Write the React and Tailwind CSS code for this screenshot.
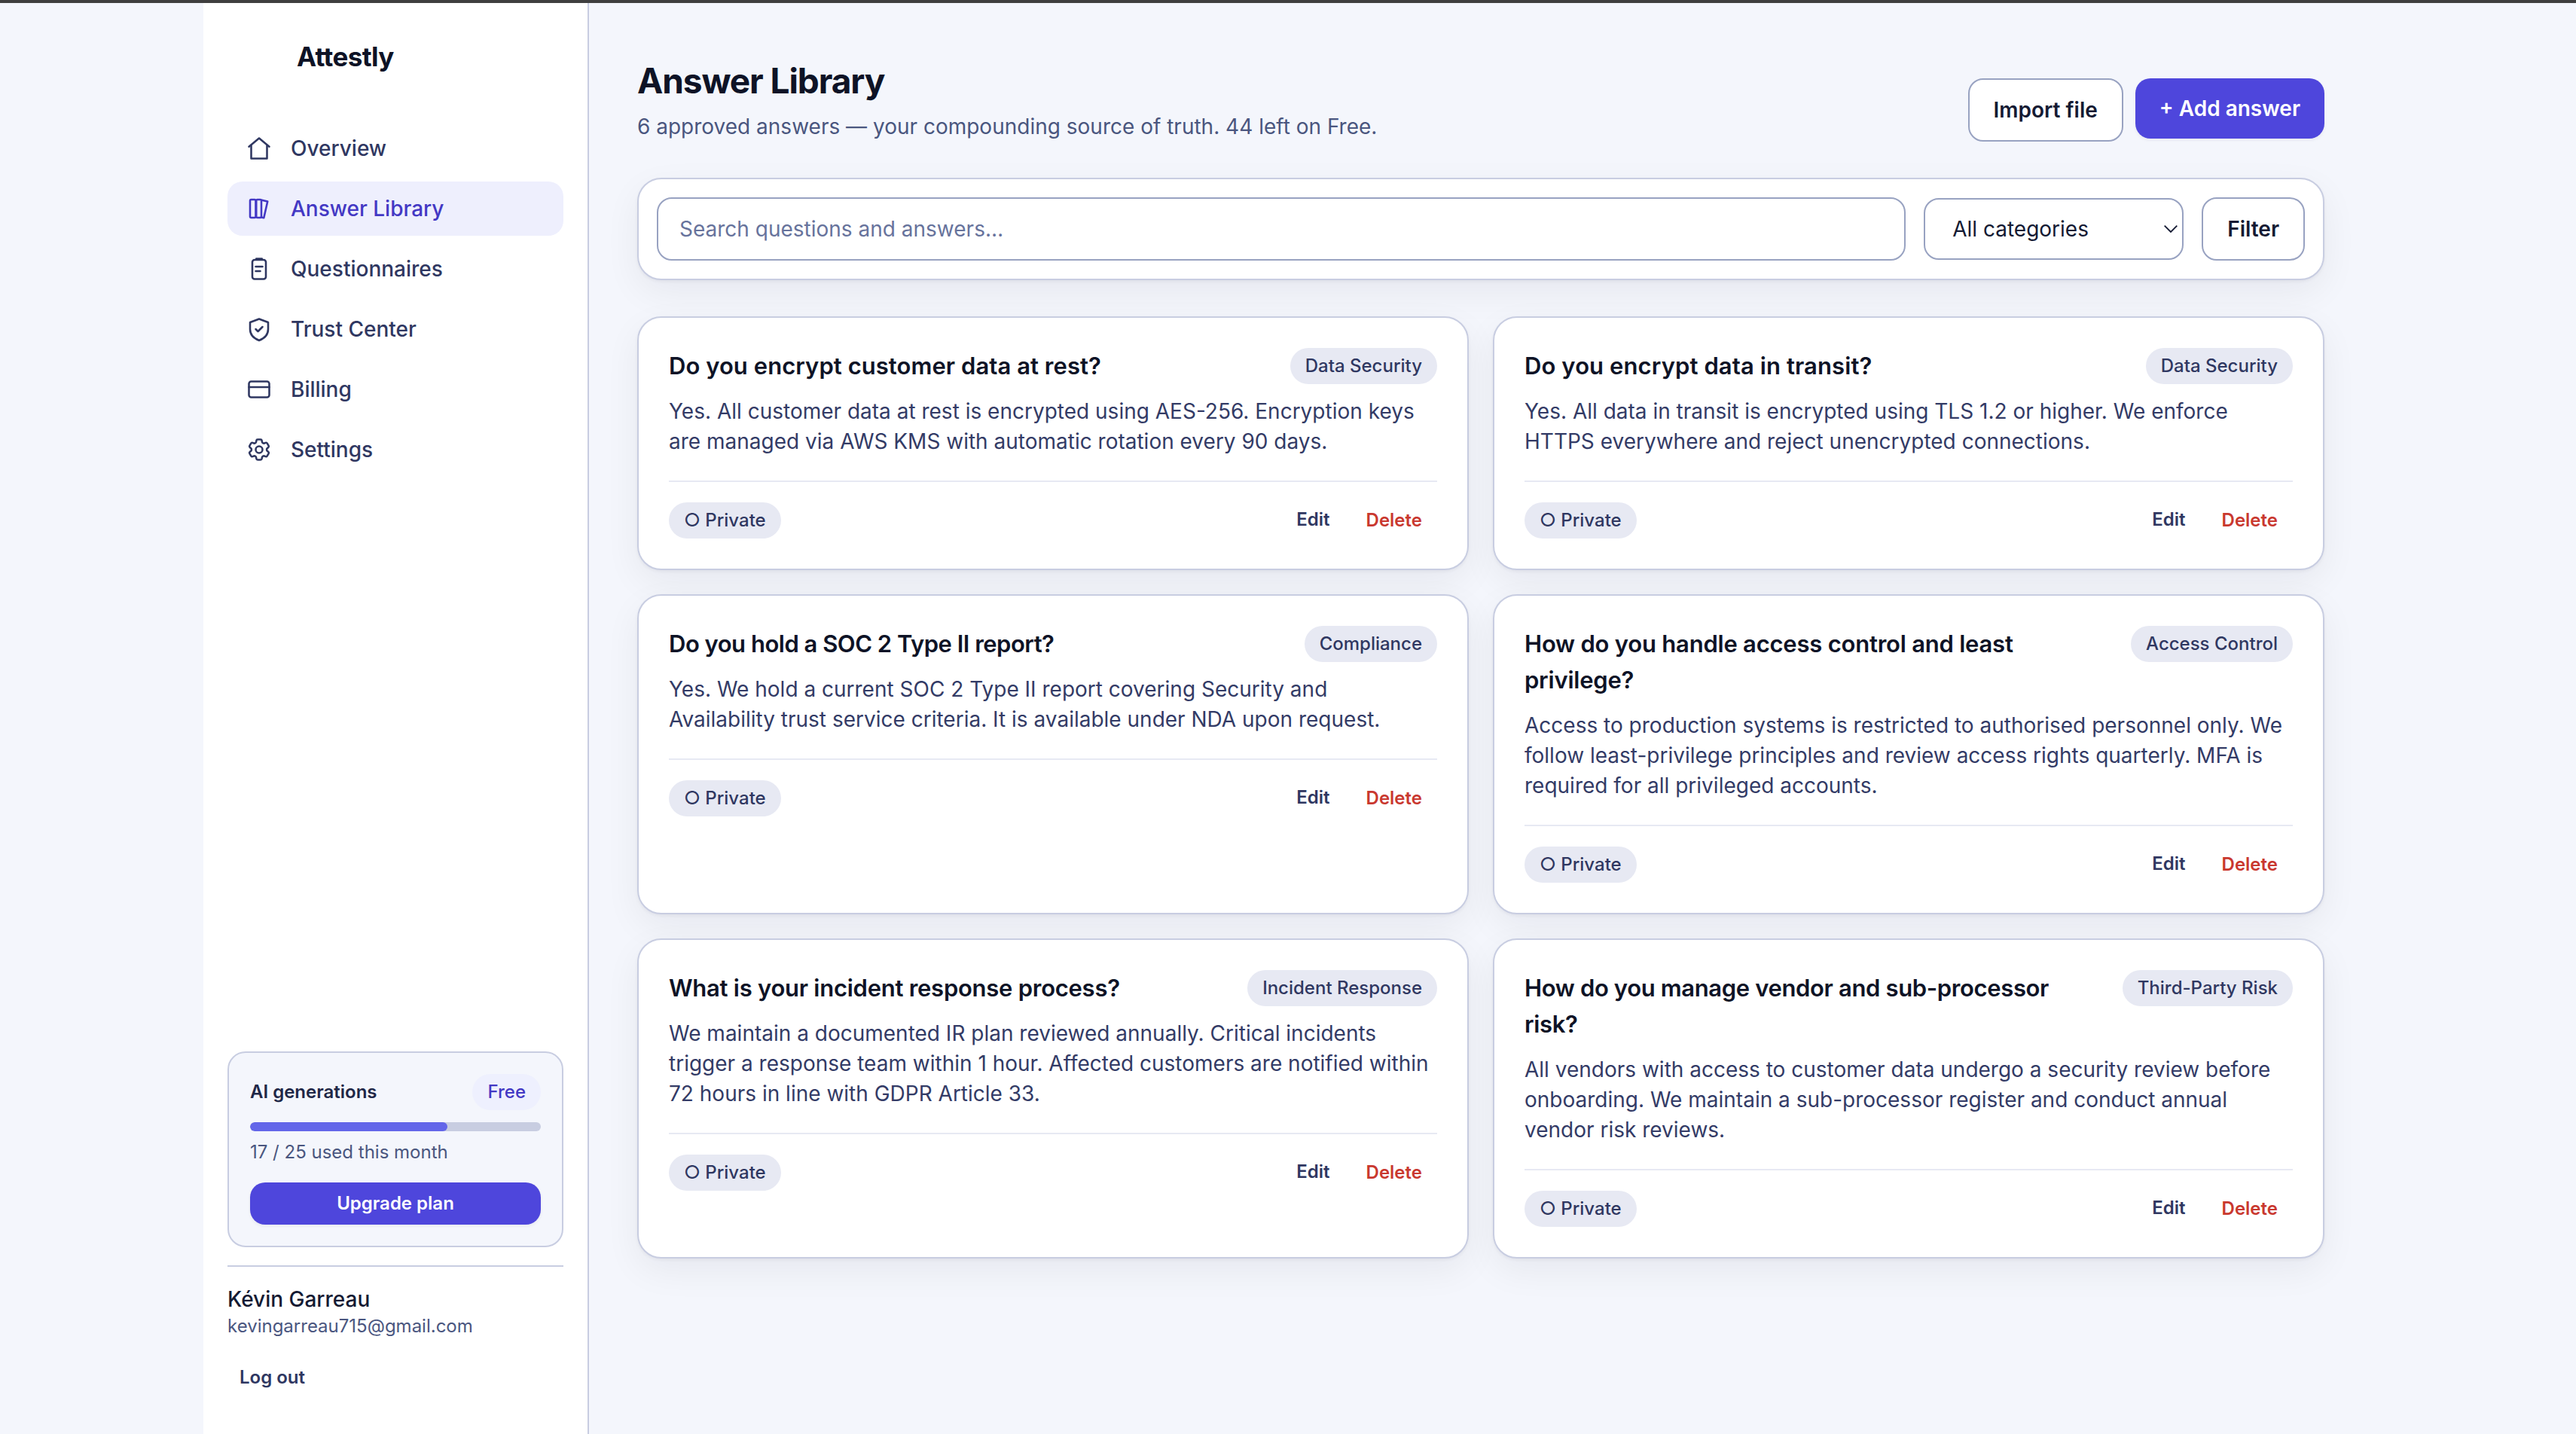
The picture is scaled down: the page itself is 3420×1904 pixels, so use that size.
import React from 'react';

const NAV_ITEMS = [
    { label: 'Overview', icon: 'home' },
    { label: 'Answer Library', icon: 'books', active: true },
    { label: 'Questionnaires', icon: 'clipboard' },
    { label: 'Trust Center', icon: 'shield' },
    { label: 'Billing', icon: 'card' },
    { label: 'Settings', icon: 'gear' },
];

const ANSWERS = [
    {
        question: 'Do you encrypt customer data at rest?',
        answer: 'Yes. All customer data at rest is encrypted using AES-256. Encryption keys are managed via AWS KMS with automatic rotation every 90 days.',
        category: 'Data Security',
        tracking: 'tracking-[0.05px]',
    },
    {
        question: 'Do you encrypt data in transit?',
        answer: 'Yes. All data in transit is encrypted using TLS 1.2 or higher. We enforce HTTPS everywhere and reject unencrypted connections.',
        category: 'Data Security',
        tracking: 'tracking-[0.1px]',
    },
    {
        question: 'Do you hold a SOC 2 Type II report?',
        answer: 'Yes. We hold a current SOC 2 Type II report covering Security and Availability trust service criteria. It is available under NDA upon request.',
        category: 'Compliance',
        tracking: 'tracking-[-0.5px]',
    },
    {
        question: 'How do you handle access control and least privilege?',
        answer: 'Access to production systems is restricted to authorised personnel only. We follow least-privilege principles and review access rights quarterly. MFA is required for all privileged accounts.',
        category: 'Access Control',
        tracking: 'tracking-[-0.22px]',
    },
    {
        question: 'What is your incident response process?',
        answer: 'We maintain a documented IR plan reviewed annually. Critical incidents trigger a response team within 1 hour. Affected customers are notified within 72 hours in line with GDPR Article 33.',
        category: 'Incident Response',
        tracking: 'tracking-[-0.26px]',
    },
    {
        question: 'How do you manage vendor and sub-processor risk?',
        answer: 'All vendors with access to customer data undergo a security review before onboarding. We maintain a sub-processor register and conduct annual vendor risk reviews.',
        category: 'Third-Party Risk',
        tracking: 'tracking-[-0.36px]',
    },
];

const USAGE = { used: 17, limit: 25 };

const ICONS = {
    home: (
        <>
            <path d="M3 10.5 12 3l9 7.5" />
            <path d="M5 9.5V21h14V9.5" />
        </>
    ),
    books: (
        <>
            <rect x="4" y="4" width="5" height="16" rx="1" />
            <rect x="9.5" y="4" width="4.5" height="16" rx="1" />
            <path d="m14.5 4.5 5 1.1-3.3 14.6-2.4-.5" />
        </>
    ),
    clipboard: (
        <>
            <rect x="6" y="4" width="12" height="17" rx="2" />
            <path d="M9.5 3h5M9 10h6M9 14h4" />
        </>
    ),
    shield: (
        <>
            <path d="m12 3 8 3v6c0 5-3.5 8.3-8 10-4.5-1.7-8-5-8-10V6z" />
            <path d="m9 12 2 2 4-4" />
        </>
    ),
    card: (
        <>
            <rect x="3" y="5" width="18" height="14" rx="2" />
            <path d="M3 10h18" />
        </>
    ),
    gear: (
        <>
            <path d="M9.594 3.94c.09-.542.56-.94 1.11-.94h2.593c.55 0 1.02.398 1.11.94l.213 1.281c.063.374.313.686.645.87.074.04.147.083.22.127.325.196.72.257 1.075.124l1.217-.456a1.125 1.125 0 0 1 1.37.49l1.296 2.247a1.125 1.125 0 0 1-.26 1.431l-1.003.827c-.293.241-.438.613-.43.992a7.723 7.723 0 0 1 0 .255c-.008.378.137.75.43.991l1.004.827c.424.35.534.955.26 1.43l-1.298 2.247a1.125 1.125 0 0 1-1.369.491l-1.217-.456c-.355-.133-.75-.072-1.076.124a6.47 6.47 0 0 1-.22.128c-.331.183-.581.495-.644.869l-.213 1.281c-.09.543-.56.94-1.11.94h-2.594c-.55 0-1.019-.398-1.11-.94l-.213-1.281c-.062-.374-.312-.686-.644-.87a6.52 6.52 0 0 1-.22-.127c-.325-.196-.72-.257-1.076-.124l-1.217.456a1.125 1.125 0 0 1-1.369-.49l-1.297-2.247a1.125 1.125 0 0 1 .26-1.431l1.004-.827c.292-.24.437-.613.43-.991a6.932 6.932 0 0 1 0-.255c.007-.38-.138-.751-.43-.992l-1.004-.827a1.125 1.125 0 0 1-.26-1.43l1.297-2.247a1.125 1.125 0 0 1 1.37-.491l1.216.456c.356.133.751.072 1.076-.124.072-.044.146-.086.22-.128.332-.183.582-.495.644-.869l.214-1.28Z" />
            <circle cx="12" cy="12" r="3" />
        </>
    ),
};

function NavIcon({ name }) {
    return (
        <svg
            viewBox="0 0 24 24"
            className="size-9 shrink-0"
            fill="none"
            stroke="currentColor"
            strokeWidth="1.7"
            strokeLinecap="round"
            strokeLinejoin="round"
        >
            {ICONS[name]}
        </svg>
    );
}

function NavItem({ item }) {
    return (
        <a
            className={`flex h-[72px] items-center gap-6 rounded-[20px] px-6 text-[28px] font-medium ${
                item.active ? 'bg-[#eeeffd] text-[#4338c4]' : 'text-[#2f3761]'
            }`}
        >
            <NavIcon name={item.icon} />
            {item.label}
        </a>
    );
}

function UsageBox() {
    return (
        <div className="rounded-3xl border-2 border-[#c8cde1] bg-[#f4f6fc] p-7">
            <div className="flex items-center justify-between">
                <span className="text-2xl font-semibold text-[#1f2747]">AI generations</span>
                <span className="flex h-12 items-center rounded-full bg-[#eef0fe] px-5 text-2xl font-medium text-[#4338c4]">Free</span>
            </div>
            <div className="mt-4 h-3 overflow-hidden rounded-full bg-[#c8cde1]">
                <div
                    className="h-full rounded-full bg-[#6366e9]"
                    style={{ width: `${(USAGE.used / USAGE.limit) * 100}%` }}
                />
            </div>
            <p className="mt-2.5 text-2xl leading-9 text-[#4a567f]">
                {USAGE.used} / {USAGE.limit} used this month
            </p>
            <button className="mt-[22px] h-14 w-full rounded-[20px] bg-[#4e46dc] text-2xl font-semibold text-white shadow-[0_2px_4px_rgba(14,18,36,0.06)]">
                Upgrade plan
            </button>
        </div>
    );
}

function Sidebar() {
    return (
        <aside className="flex w-[512px] shrink-0 flex-col border-r-2 border-[#c8cde1] bg-white px-8 pt-8 pb-[47px]">
            <div className="h-[78px] pl-[92px] text-[35px] leading-[78px] font-bold tracking-[-0.6px] text-[#0e1326]">
                Attestly
            </div>
            <nav className="mt-[47px] flex flex-col gap-2">
                {NAV_ITEMS.map((item) => (
                    <NavItem key={item.label} item={item} />
                ))}
            </nav>

            <div className="mt-auto">
                <UsageBox />
                <div className="mt-6 border-t-2 border-[#c8cde1] pt-6">
                    <div className="text-[28px] leading-[39px] font-medium text-[#141a33]">Kévin Garreau</div>
                    <div className="text-2xl leading-8 text-[#4a567f]">kevingarreau715@gmail.com</div>
                    <button className="mt-6 h-14 px-4 text-2xl font-semibold text-[#2f3761]">Log out</button>
                </div>
            </div>
        </aside>
    );
}

function PageHeader() {
    return (
        <header className="flex items-end justify-between">
            <div>
                <h1 className="text-[46px] leading-[78px] font-bold tracking-[-1.1px] text-[#0e1326]">Answer Library</h1>
                <p className="mt-0.5 text-[28px] leading-10 text-[#4a567f]">
                    6 approved answers — your compounding source of truth. 44 left on Free.
                </p>
            </div>
            <div className="flex items-start gap-4">
                <button className="h-[84px] rounded-[20px] border-2 border-[#98a2c1] bg-white px-8 text-[28px] font-semibold text-[#141a33]">
                    Import file
                </button>
                <button className="h-20 rounded-[20px] bg-[#4e46dc] px-8 text-[28px] font-semibold text-white shadow-[0_2px_4px_rgba(14,18,36,0.06)]">
                    + Add answer
                </button>
            </div>
        </header>
    );
}

function SearchBar() {
    return (
        <div className="mt-12 flex items-center gap-6 rounded-[32px] border-2 border-[#c8cde1] bg-white p-6 shadow-[0_2px_4px_rgba(14,18,36,0.05),0_16px_48px_rgba(14,18,36,0.06)]">
            <input
                type="text"
                placeholder="Search questions and answers…"
                className="h-[84px] min-w-0 flex-1 rounded-[20px] border-2 border-[#98a2c1] bg-white px-7 text-[28px] placeholder:text-[#67739c]"
            />
            <div className="flex h-[82px] w-[345px] items-center justify-between rounded-[20px] border-2 border-[#98a2c1] pr-1.5 pl-9 text-[28px] text-[#141a33]">
                All categories
                <svg viewBox="0 0 18 10" className="h-2.5 w-[18px]" fill="none" stroke="#141a33" strokeWidth="1.8">
                    <path d="m.7.7 8.3 8.3L17.3.7" />
                </svg>
            </div>
            <button className="h-[84px] rounded-[20px] border-2 border-[#98a2c1] bg-white px-8 text-[28px] font-semibold text-[#141a33]">
                Filter
            </button>
        </div>
    );
}

function Badge({ children }) {
    return (
        <span className="flex h-12 shrink-0 items-center rounded-full bg-[#e7e9f3] px-5 text-2xl font-medium whitespace-nowrap text-[#2f3761]">
            {children}
        </span>
    );
}

function AnswerCard({ question, answer, category, tracking }) {
    return (
        <article className="rounded-[32px] border-2 border-[#c8cde1] bg-white p-10 shadow-[0_2px_4px_rgba(14,18,36,0.05),0_16px_48px_rgba(14,18,36,0.06)]">
            <div className="flex items-start justify-between gap-10">
                <h2 className={`text-[31px] leading-[48px] font-semibold text-[#0e1326] ${tracking}`}>{question}</h2>
                <Badge>{category}</Badge>
            </div>
            <p className="mt-4 text-[28px] leading-10 text-[#333b66]">{answer}</p>
            <div className="mt-8 flex items-center justify-between border-t-2 border-[#e7e9f3] pt-[27px]">
                <Badge>○ Private</Badge>
                <div className="flex items-center gap-2 text-2xl font-semibold">
                    <button className="px-5 pb-0.5 text-[#2f3761]">Edit</button>
                    <button className="px-5 text-[#c9382f]">Delete</button>
                </div>
            </div>
        </article>
    );
}

export default function App() {
    return (
        <div className="h-[1904px] w-full overflow-hidden border-t-4 border-[#3f3f3f] bg-[#f4f6fc] font-['Inter',sans-serif]">
            <div className="ml-[270px] flex h-full w-[2880px]">
                <Sidebar />
                <main className="min-w-0 flex-1 p-16">
                    <PageHeader />
                    <SearchBar />
                    <div className="mt-12 grid grid-cols-2 gap-8">
                        {ANSWERS.map((item) => (
                            <AnswerCard key={item.question} {...item} />
                        ))}
                    </div>
                </main>
            </div>
        </div>
    );
}
